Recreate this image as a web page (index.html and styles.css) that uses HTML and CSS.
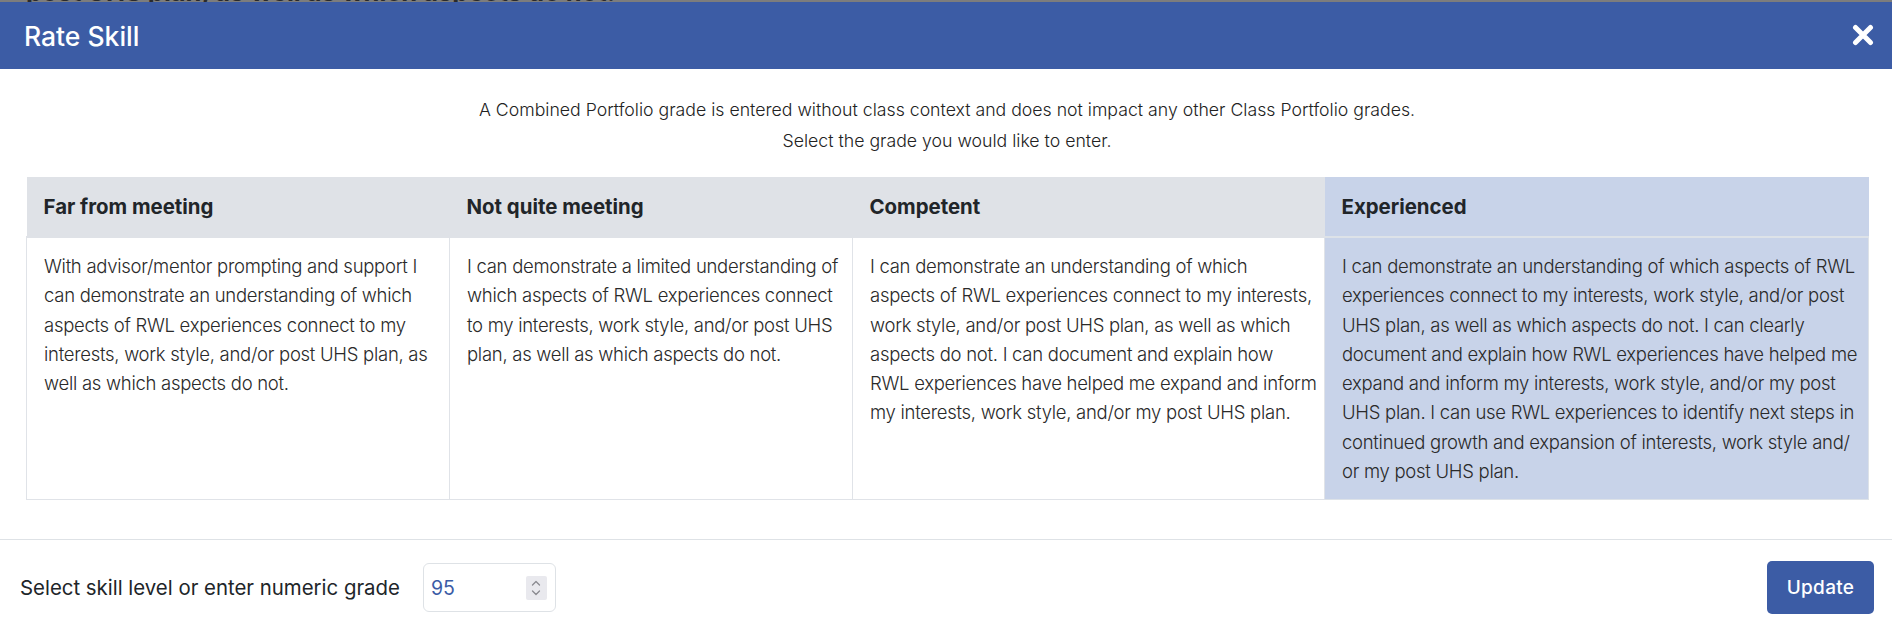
FILE: index.html
```html
<!DOCTYPE html>
<html lang="en">
<head>
<meta charset="utf-8">
<title>Rate Skill</title>
<link rel="stylesheet" href="styles.css">
</head>
<body>
<div class="backdrop-strip"><div class="backdrop-text">post UHS plan, as well as which aspects do not.</div></div>
<div class="modal">
  <header class="modal-header">
    <h1 class="modal-title">Rate Skill</h1>
    <button class="close-btn" aria-label="Close">
      <svg width="22" height="22" viewBox="0 0 22 22"><path d="M3.5 3.5 L18.5 18.5 M18.5 3.5 L3.5 18.5" stroke="#fff" stroke-width="5" stroke-linecap="round" fill="none"/></svg>
    </button>
  </header>
  <div class="modal-body">
    <div class="intro">
      <p>A Combined Portfolio grade is entered without class context and does not impact any other Class Portfolio grades.</p>
      <p>Select the grade you would like to enter.</p>
    </div>
    <table class="rubric">
      <colgroup>
        <col class="c1"><col class="c2"><col class="c3"><col class="c4">
      </colgroup>
      <thead>
        <tr>
          <th>Far from meeting</th>
          <th>Not quite meeting</th>
          <th>Competent</th>
          <th class="selected">Experienced</th>
        </tr>
      </thead>
      <tbody>
        <tr>
          <td>With advisor/mentor prompting and support I can demonstrate an understanding of which aspects of RWL experiences connect to my interests, work style, and/or post UHS plan, as well as which aspects do not.</td>
          <td>I can demonstrate a limited understanding of which aspects of RWL experiences connect to my interests, work style, and/or post UHS plan, as well as which aspects do not.</td>
          <td class="competent">I can demonstrate an understanding of which<br>aspects of RWL experiences connect to my interests,<br>work style, and/or post UHS plan, as well as which<br>aspects do not. I can document and explain how<br>RWL experiences have helped me expand and inform<br>my interests, work style, and/or my post UHS plan.</td>
          <td class="selected">I can demonstrate an understanding of which aspects of RWL experiences connect to my interests, work style, and/or post UHS plan, as well as which aspects do not. I can clearly document and explain how RWL experiences have helped me expand and inform my interests, work style, and/or my post UHS plan. I can use RWL experiences to identify next steps in continued growth and expansion of interests, work style and/ or my post UHS plan.</td>
        </tr>
      </tbody>
    </table>
  </div>
  <footer class="modal-footer">
    <div class="grade-entry">
      <label class="grade-label" for="grade">Select skill level or enter numeric grade</label>
      <div class="grade-input">
        <span class="grade-value" id="grade">95</span>
        <span class="spinner">
          <svg width="12" height="20" viewBox="0 0 12 20"><path d="M2.5 7 L6 3.5 L9.5 7 M2.5 13 L6 16.5 L9.5 13" stroke="#8a8a90" stroke-width="1.3" fill="none" stroke-linecap="round" stroke-linejoin="round"/></svg>
        </span>
      </div>
    </div>
    <button class="update-btn">Update</button>
  </footer>
</div>
</body>
</html>
```
FILE: styles.css
```css
* { box-sizing: border-box; }
html, body { margin: 0; padding: 0; }
body {
  background: #fff;
  font-family: Inter, "Noto Sans", "Liberation Sans", sans-serif;
  color: #212529;
  width: 1892px;
  height: 628px;
  overflow: hidden;
}
.backdrop-strip {
  height: 2px;
  overflow: hidden;
  background: #7d7d7d;
}
.backdrop-text {
  margin-top: -23px;
  padding-left: 26px;
  font-size: 25.5px;
  font-weight: 700;
  line-height: 30px;
  color: #2a2a2a;
  white-space: nowrap;
}
.modal { background: #fff; }
.modal-header {
  height: 67px;
  background: #3c5ca5;
  display: flex;
  align-items: center;
  justify-content: space-between;
  padding: 0 18px 0 24px;
}
.modal-title {
  margin: 0;
  font-size: 26.5px;
  font-weight: 500;
  color: #fff;
}
.close-btn {
  background: none;
  border: 0;
  padding: 0;
  width: 22px;
  height: 22px;
  display: flex;
  margin-top: -2px;
}
.modal-body {
  padding: 25px 24px 39px 26px;
}
.intro {
  text-align: center;
  font-size: 17.7px;
  font-weight: 300;
  line-height: 31px;
  color: #222;
  margin-bottom: 21px;
}
.intro p { margin: 0; }
.rubric {
  width: 1842px;
  table-layout: fixed;
  border-collapse: collapse;
}
.rubric col.c1 { width: 423px; }
.rubric col.c2 { width: 403px; }
.rubric col.c3 { width: 472px; }
.rubric col.c4 { width: 544px; }
.rubric th {
  background: #dfe2e7;
  text-align: left;
  font-size: 20.4px;
  font-weight: 700;
  color: #212529;
  height: 60px;
  padding: 0 17px;
  border-bottom: 2px solid #dfe2e7;
}
.rubric th.selected {
  background: #c8d3e9;
  border-bottom-color: #dde2e8;
}
.rubric td {
  vertical-align: top;
  padding: 14px 8px 13px 17px;
  font-size: 18.5px;
  font-weight: 300;
  letter-spacing: -0.28px;
  line-height: 29.3px;
  color: #2a2a2a;
  border: 1px solid #e0e3e8;
  border-top: 0;
  height: 261px;
}
.rubric td.competent {
  padding-right: 4px;
}
.rubric td.selected {
  background: #c8d3e9;
  border-color: #c8d3e9 #dde2e8 #dde2e8 #c8d3e9;
}
.modal-footer {
  border-top: 1px solid #dee2e6;
  display: flex;
  align-items: center;
  justify-content: space-between;
  padding: 21px 18px 16px 20px;
}
.grade-entry {
  display: flex;
  align-items: center;
  gap: 23px;
}
.grade-label {
  font-size: 20.4px;
  font-weight: 400;
  color: #212529;
}
.grade-input {
  width: 133px;
  height: 49px;
  border: 1px solid #dee2e6;
  border-radius: 6px;
  display: flex;
  align-items: center;
  justify-content: space-between;
  padding: 0 8px 0 7px;
}
.grade-value {
  font-size: 19.5px;
  color: #3b5ca6;
  font-weight: 400;
}
.spinner {
  width: 21px;
  height: 24px;
  background: #e9e9ee;
  display: flex;
  align-items: center;
  justify-content: center;
  border-radius: 2px;
}
.update-btn {
  width: 107px;
  height: 53px;
  background: #3c5ca5;
  color: #fff;
  border: 0;
  border-radius: 5px;
  font-family: inherit;
  font-size: 19px;
  font-weight: 500;
  letter-spacing: 0.3px;
}
```
